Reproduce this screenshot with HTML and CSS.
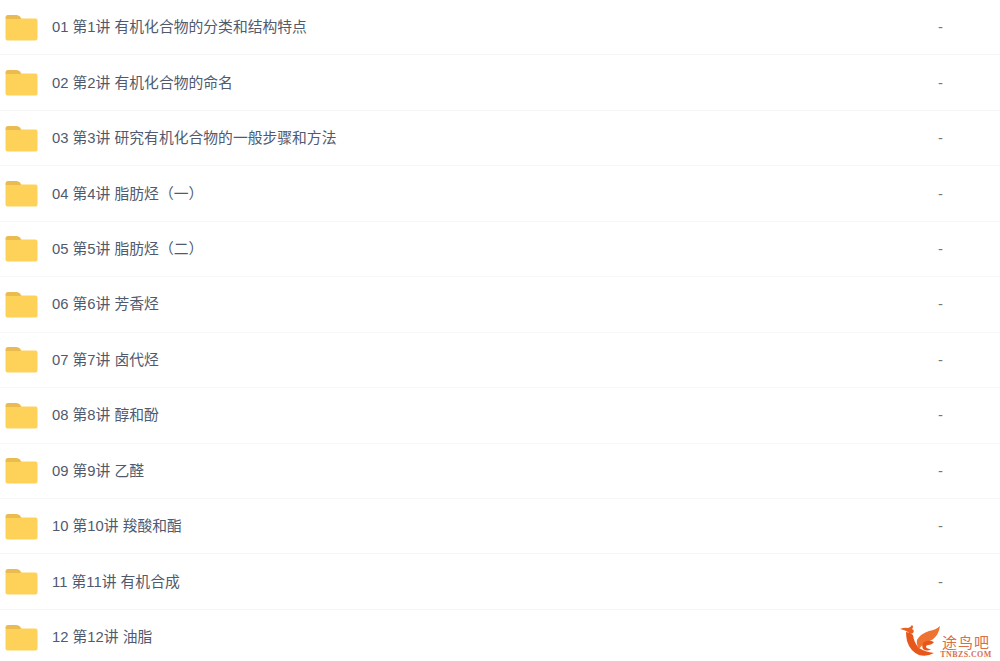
FILE: index.html
```html
<!DOCTYPE html>
<html lang="zh-CN">
<head>
<meta charset="utf-8">
<title>文件列表</title>
<link rel="stylesheet" href="styles.css">
</head>
<body>
<svg class="defs" width="0" height="0" aria-hidden="true"><defs>
<symbol id="folder" viewBox="0 0 32 26">
<path d="M0 2.5Q0 0 2.5 0H11Q13 0 14.500 1.500L16 4H0Z" fill="#e9bb50"/>
<path d="M0 4H14.500L15.500 3.500H30Q32 3.500 32 5.500V23.500Q32 25.500 30 25.500H2Q0 25.500 0 23.500Z" fill="#fed258"/>
</symbol>
</defs></svg>
<ul class="list">
<li class="row"><svg class="icon"><use href="#folder"/></svg><span class="name">01 第1讲 有机化合物的分类和结构特点</span><span class="size">-</span></li>
<li class="row"><svg class="icon"><use href="#folder"/></svg><span class="name">02 第2讲 有机化合物的命名</span><span class="size">-</span></li>
<li class="row"><svg class="icon"><use href="#folder"/></svg><span class="name">03 第3讲 研究有机化合物的一般步骤和方法</span><span class="size">-</span></li>
<li class="row"><svg class="icon"><use href="#folder"/></svg><span class="name">04 第4讲 脂肪烃（一）</span><span class="size">-</span></li>
<li class="row"><svg class="icon"><use href="#folder"/></svg><span class="name">05 第5讲 脂肪烃（二）</span><span class="size">-</span></li>
<li class="row"><svg class="icon"><use href="#folder"/></svg><span class="name">06 第6讲 芳香烃</span><span class="size">-</span></li>
<li class="row"><svg class="icon"><use href="#folder"/></svg><span class="name">07 第7讲 卤代烃</span><span class="size">-</span></li>
<li class="row"><svg class="icon"><use href="#folder"/></svg><span class="name">08 第8讲 醇和酚</span><span class="size">-</span></li>
<li class="row"><svg class="icon"><use href="#folder"/></svg><span class="name">09 第9讲 乙醛</span><span class="size">-</span></li>
<li class="row"><svg class="icon"><use href="#folder"/></svg><span class="name">10 第10讲 羧酸和酯</span><span class="size">-</span></li>
<li class="row"><svg class="icon"><use href="#folder"/></svg><span class="name">11 第11讲 有机合成</span><span class="size">-</span></li>
<li class="row"><svg class="icon"><use href="#folder"/></svg><span class="name">12 第12讲 油脂</span><span class="size">-</span></li>
</ul>
<div class="logo">
<svg class="logo-mark" viewBox="0 0 42 32">
<path d="M1 5Q6 3 9 4Q11 4 13 1Q15 3 13 5Q16 6 14 9Q12 11 9 8Q6 6 1 5Z" fill="#ea5f22"/>
<path d="M7 8Q11 8 14 11Q15 19 20 24Q26 28 35 29Q28 33 20 31Q11 27 8 17Q7 12 7 8Z" fill="#e8561a"/>
<path d="M41 2Q40 11 33 16Q25 18 20 25Q17 20 18 16Q21 10 30 7Q37 6 41 2Z" fill="#ee7330"/>
<path d="M25 18Q30 15 35 18Q33 21 29 21Q27 21 27 23Q28 25 32 25Q28 28 24 25Q22 21 25 18Z" fill="#e8561a"/>
</svg>
<div class="logo-text">
<span class="logo-cn">途鸟吧</span>
<span class="logo-en">TNBZS.COM</span>
</div>
</div>
</body>
</html>
```
FILE: styles.css
```css
* { box-sizing: border-box; }
html, body { margin: 0; padding: 0; }
body {
  width: 1000px;
  height: 661px;
  overflow: hidden;
  background: #fff;
  position: relative;
  font-family: "Liberation Sans", "Noto Sans CJK SC", sans-serif;
}
.defs { position: absolute; }
.list { list-style: none; margin: -1px 0 0; padding: 0; }
.row {
  height: 55.45px;
  display: flex;
  align-items: center;
  padding: 0 57px 0 5px;
  border-top: 1px solid #f5f6f7;
  font-size: 14.8px;
  color: #505a6e;
}
.icon { width: 33px; height: 26px; flex: none; margin: 1px 14px 0 0; }
.name { flex: 1; white-space: nowrap; line-height: 18px; }
.size { color: #777; }
.logo {
  position: absolute;
  left: 899px;
  top: 624px;
  display: flex;
  align-items: flex-start;
  background: #fff;
}
.logo-mark { width: 42px; height: 32px; flex: none; }
.logo-text { display: flex; flex-direction: column; padding-top: 11px; align-items: center; width: 50px; }
.logo-cn { font-size: 15px; line-height: 16px; letter-spacing: 1px; color: #d96f48; }
.logo-en { font-family: "Liberation Serif", serif; font-weight: bold; font-size: 8px; line-height: 8px; letter-spacing: 0.4px; color: #d96f48; }
```
